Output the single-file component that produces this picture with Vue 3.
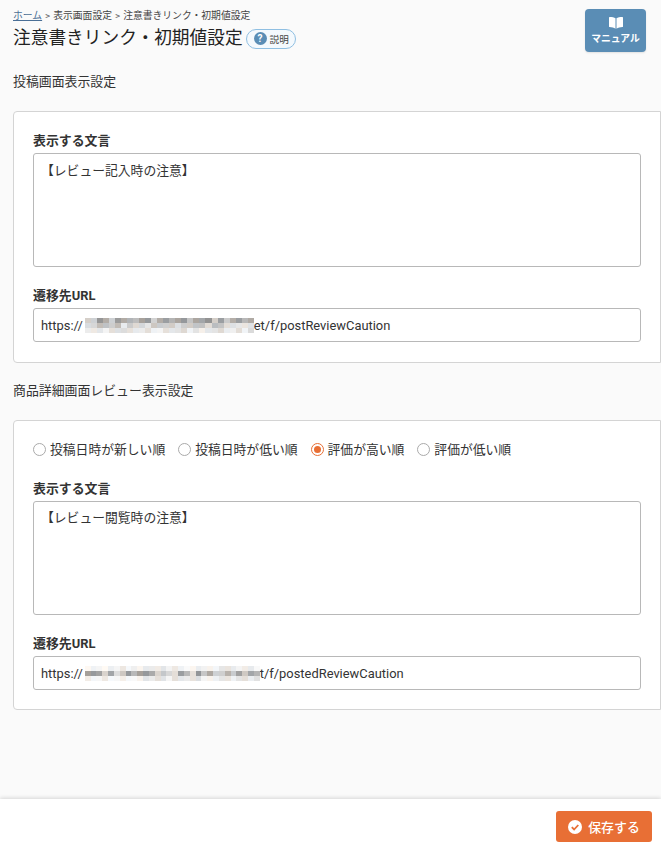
<script setup>
const seed = (n, s, rows) => {
  const out = []
  let x = s
  for (let i = 0; i < n; i++) {
    x = (x * 9301 + 49297) % 233280
    const t = x / 233280
    const [lo, hi] = rows[Math.floor(i / (n / 3))]
    const v = Math.round(lo + t * (hi - lo))
    const tint = i % 3 === 0 ? 6 : i % 3 === 1 ? -3 : 0
    out.push(`rgb(${v + tint},${v},${v - tint})`)
  }
  return out
}
const blurA = seed(84, 17, [[145, 215], [185, 235], [215, 245]])
const blurB = seed(90, 43, [[228, 250], [145, 230], [222, 250]])
const radios = [
  { label: '投稿日時が新しい順', on: false },
  { label: '投稿日時が低い順', on: false },
  { label: '評価が高い順', on: true },
  { label: '評価が低い順', on: false },
]
</script>

<template>
  <div class="page">
    <header class="head">
      <div class="head-main">
        <nav class="crumbs"><a class="home">ホーム</a><i>&gt;</i>表示画面設定<i>&gt;</i>注意書きリンク・初期値設定</nav>
        <div class="title-row">
          <h1>注意書きリンク・初期値設定</h1>
          <span class="help"><b class="q">?</b>説明</span>
        </div>
      </div>
      <button class="manual">
        <svg width="14" height="12" viewBox="0 0 14 12"><path fill="#fff" d="M6.500 1.300C5.300.4 3 0 .7 0 .3 0 0 .3 0 .6v8.900c0 .3.300.6.600.6 2.200.1 4.400.6 5.900 1.600V1.300zM7.500 1.300C8.700.4 11 0 13.300 0c.4 0 .7.300.7.600v8.900c0 .3-.3.6-.6.6-2.200.1-4.400.6-5.900 1.600V1.300z"/></svg>
        <span>マニュアル</span>
      </button>
    </header>

    <h2 class="section">投稿画面表示設定</h2>
    <section class="card">
      <label class="lbl">表示する文言</label>
      <textarea class="area" readonly>【レビュー記入時の注意】</textarea>
      <label class="lbl url-lbl">遷移先URL</label>
      <div class="input">https://<span class="blur"><s v-for="(c, i) in blurA" :key="i" :style="{ background: c }"></s></span>et/f/postReviewCaution</div>
    </section>

    <h2 class="section second">商品詳細画面レビュー表示設定</h2>
    <section class="card card-b">
      <div class="radios">
        <span v-for="r in radios" :key="r.label" class="radio"><em :class="{ on: r.on }"></em>{{ r.label }}</span>
      </div>
      <label class="lbl">表示する文言</label>
      <textarea class="area area-b" readonly>【レビュー閲覧時の注意】</textarea>
      <label class="lbl url-lbl">遷移先URL</label>
      <div class="input">https://<span class="blur wide"><s v-for="(c, i) in blurB" :key="i" :style="{ background: c }"></s></span>t/f/postedReviewCaution</div>
    </section>

    <footer class="foot">
      <button class="save">
        <svg width="14" height="14" viewBox="0 0 14 14"><circle cx="7" cy="7" r="7" fill="#fff"/><path d="M3.800 7.200l2.300 2.300 4.200-4.500" fill="none" stroke="#e86f35" stroke-width="1.800"/></svg>
        保存する
      </button>
    </footer>
  </div>
</template>

<style scoped>
.page {
  width: 661px;
  height: 846px;
  background: #fafafa;
  font-family: Roboto, "Noto Sans CJK JP", sans-serif;
  color: #333;
  display: flex;
  flex-direction: column;
  padding-left: 13px;
  box-sizing: border-box;
  overflow: hidden;
  position: relative;
}
.head {
  display: flex;
  justify-content: space-between;
  align-items: flex-start;
  padding: 9px 15px 0 0;
  height: 72px;
  flex: none;
  box-sizing: border-box;
}
.crumbs {
  font-size: 9.800px;
  line-height: 14px;
  color: #444;
  white-space: nowrap;
}
.crumbs i {
  font-style: normal;
  margin: 0 3px;
  color: #666;
}
.home {
  color: #4a6f96;
  text-decoration: underline;
}
.title-row {
  display: flex;
  align-items: center;
  margin-top: 2px;
  gap: 3px;
}
h1 {
  margin: 0;
  font-size: 17.700px;
  font-weight: 400;
  line-height: 27px;
  color: #222;
}
.help {
  display: inline-flex;
  align-items: center;
  gap: 3px;
  width: 50px;
  height: 20px;
  box-sizing: border-box;
  padding-left: 7px;
  border: 1px solid #8fbfe2;
  border-radius: 10px;
  background: #f4f9fd;
  font-size: 9.600px;
  color: #444;
}
.q {
  width: 13px;
  height: 13px;
  border-radius: 50%;
  background: #5a8db5;
  color: #fff;
  font-size: 10px;
  line-height: 13px;
  text-align: center;
}
.manual {
  width: 61px;
  height: 43px;
  border: 0;
  border-radius: 4px;
  background: #5a8db5;
  color: #fff;
  font: 700 9.800px/13px Roboto, "Noto Sans CJK JP", sans-serif;
  display: flex;
  flex-direction: column;
  align-items: center;
  justify-content: center;
  gap: 3px;
  padding: 0;
  box-shadow: 0 1px 2px rgba(0, 0, 0, .1);
}
.section {
  margin: 0;
  height: 39px;
  flex: none;
  font-size: 12.900px;
  font-weight: 400;
  line-height: 19px;
  color: #333;
}
.section.second {
  margin-top: 18px;
}
.card {
  background: #fff;
  border: 1px solid #d4d4d4;
  border-radius: 4px 0 0 4px;
  padding: 19px 19px 20px 19px;
  width: 648px;
  flex: none;
  box-sizing: border-box;
}
.card-b {
  padding-bottom: 19px;
}
.lbl {
  display: block;
  font-size: 12.900px;
  font-weight: 700;
  line-height: 19px;
  color: #333;
  height: 22px;
}
.url-lbl {
  margin-top: 19px;
}
.area {
  display: block;
  width: 608px;
  height: 114px;
  box-sizing: border-box;
  border: 1px solid #b8b8b8;
  border-radius: 3px;
  padding: 7px;
  resize: none;
  outline: none;
  font: 12.800px/19px Roboto, "Noto Sans CJK JP", sans-serif;
  color: #333;
  background: #fff;
}
.area-b {
  padding-top: 6px;
}
.input {
  display: flex;
  align-items: center;
  width: 608px;
  height: 34px;
  box-sizing: border-box;
  border: 1px solid #b8b8b8;
  border-radius: 3px;
  padding: 0 7px;
  font-size: 12.900px;
  color: #333;
  white-space: nowrap;
}
.blur {
  display: grid;
  grid-template-columns: repeat(28, 1fr);
  grid-auto-rows: 5px;
  width: 169px;
  margin-left: 2px;
  flex: none;
  filter: blur(.7px);
}
.blur.wide {
  grid-template-columns: repeat(30, 1fr);
  width: 175px;
}
.blur s {
  display: block;
}
.radios {
  display: flex;
  gap: 13px;
  height: 39px;
  font-size: 12.800px;
  line-height: 19px;
}
.radio {
  display: flex;
  align-items: flex-start;
  gap: 4px;
  color: #333;
}
.radio em {
  width: 13px;
  height: 13px;
  margin-top: 3px;
  border: 1px solid #aaa;
  border-radius: 50%;
  box-sizing: border-box;
  background: #fff;
  position: relative;
}
.radio em.on {
  border-color: #e86f35;
}
.radio em.on::after {
  content: "";
  position: absolute;
  inset: 2px;
  border-radius: 50%;
  background: #e86f35;
}
.foot {
  position: absolute;
  left: 0;
  right: 0;
  bottom: 0;
  height: 47px;
  background: #fff;
  box-shadow: 0 -1px 4px rgba(0, 0, 0, .15);
  display: flex;
  justify-content: flex-end;
  align-items: flex-start;
  padding: 12px 9px 0 0;
  box-sizing: border-box;
}
.save {
  width: 96px;
  height: 31px;
  border: 0;
  border-radius: 3px;
  background: #e86f35;
  color: #fff;
  font: 500 12.900px Roboto, "Noto Sans CJK JP", sans-serif;
  display: flex;
  align-items: center;
  justify-content: center;
  gap: 6px;
  padding: 0;
}
</style>
